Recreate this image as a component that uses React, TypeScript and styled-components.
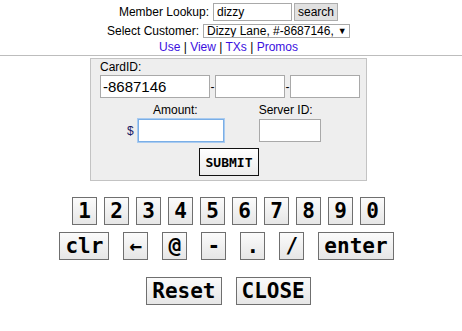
import React from "react";
import styled, { createGlobalStyle } from "styled-components";

const Global = createGlobalStyle`
  html, body { margin: 0; padding: 0; background: #fff; }
  body { font-family: "Liberation Sans", Arial, sans-serif; font-size: 12px; color: #000; }
`;

const Page = styled.div`
  display: flex;
  flex-direction: column;
  align-items: center;
`;

const Header = styled.div`
  display: flex;
  flex-direction: column;
  align-items: center;
  padding: 3px 5px 0 0;
  width: 100%;
  box-sizing: border-box;
`;

const Row = styled.div<{ $mt?: number }>`
  display: flex;
  align-items: center;
  justify-content: center;
  margin-top: ${(p) => p.$mt ?? 0}px;
`;

const Label = styled.span`
  font-size: 12px;
  line-height: 14px;
  color: #000;
  white-space: pre;
`;

const LookupInput = styled.input`
  box-sizing: border-box;
  width: 79px;
  height: 18px;
  margin: 0 0 0 4px;
  padding: 0 3px;
  border: 1px solid #a9a9a9;
  font-family: "Liberation Sans", Arial, sans-serif;
  font-size: 12px;
  background: #fff;
  outline: none;
`;

const SmallButton = styled.button`
  box-sizing: border-box;
  height: 18px;
  margin-left: 2px;
  padding: 0 3px;
  border: 1px solid #adadad;
  background: #e1e1e1;
  font-family: "Liberation Sans", Arial, sans-serif;
  font-size: 12px;
  line-height: 14px;
  color: #000;
`;

const Select = styled.div`
  box-sizing: border-box;
  width: 147px;
  height: 14px;
  margin-left: 4px;
  padding: 0 3px;
  border: 1px solid #a9a9a9;
  background: #fff;
  display: flex;
  align-items: center;
  justify-content: space-between;
  font-size: 12px;
  line-height: 12px;
  overflow: hidden;
  white-space: nowrap;
`;

const Arrow = styled.span`
  font-size: 9px;
  margin-left: 4px;
`;

const Links = styled.div`
  margin-top: 2px;
  font-size: 12px;
  line-height: 14px;
  color: #000;
  white-space: pre;
`;

const Link = styled.a`
  color: #3b0fe0;
  text-decoration: none;
`;

const Rule = styled.div`
  align-self: stretch;
  height: 0;
  margin-right: -5px;
  border-top: 1px solid #bdbdbd;
  margin-top: 1px;
`;

const Panel = styled.div`
  box-sizing: border-box;
  width: 277px;
  height: 123px;
  margin-top: 2px;
  border: 1px solid #c3c3c3;
  background: #eeeeee;
  padding: 1px 0 0 9px;
  display: flex;
  flex-direction: column;
`;

const CardRow = styled.div`
  display: flex;
  align-items: center;
  margin-top: 1px;
`;

const Field = styled.input<{ $w: number; $h?: number; $focus?: boolean }>`
  box-sizing: border-box;
  width: ${(p) => p.$w}px;
  height: ${(p) => p.$h ?? 23}px;
  margin: 0;
  padding: 0 2px;
  border: 1px solid ${(p) => (p.$focus ? "#7aaee6" : "#a9a9a9")};
  box-shadow: ${(p) => (p.$focus ? "0 0 0 1px #a9cbf0" : "none")};
  background: #fff;
  font-family: "Liberation Sans", Arial, sans-serif;
  font-size: 15px;
  color: #000;
  outline: none;
`;

const Dash = styled.span`
  width: 5px;
  text-align: center;
  font-size: 12px;
`;

const FieldsRow = styled.div`
  display: flex;
  margin-top: 5px;
`;

const Column = styled.div<{ $align: string; $ml: number }>`
  display: flex;
  flex-direction: column;
  align-items: ${(p) => p.$align};
  margin-left: ${(p) => p.$ml}px;
`;

const Dollar = styled.span`
  font-size: 12px;
  color: #1c1a66;
  margin-right: 4px;
`;

const InputLine = styled.div`
  display: flex;
  align-items: center;
  margin-top: 2px;
`;

const Submit = styled.button`
  box-sizing: border-box;
  align-self: flex-start;
  margin: 6px 0 0 99px;
  width: 60px;
  height: 28px;
  padding: 0;
  border: 1px solid #111;
  background: linear-gradient(#ffffff, #ececec);
  font-family: "DejaVu Sans Mono", "Liberation Mono", monospace;
  font-weight: bold;
  font-size: 13px;
  color: #000;
`;

const Keypad = styled.div`
  display: flex;
  flex-direction: column;
  align-items: center;
  margin: 16px 5px 0 0;
`;

const KeyRow = styled.div<{ $gap: number; $mt: number; $pr?: number }>`
  display: flex;
  gap: ${(p) => p.$gap}px;
  margin-top: ${(p) => p.$mt}px;
  padding-right: ${(p) => p.$pr ?? 0}px;
`;

const Key = styled.button`
  box-sizing: border-box;
  height: 28px;
  min-width: 25px;
  padding: 0 5px;
  border: 1px solid #6f6f6f;
  background: linear-gradient(#fbfbfb, #e6e6e6);
  font-family: "DejaVu Sans Mono", "Liberation Mono", monospace;
  font-weight: bold;
  font-size: 21px;
  line-height: 26px;
  color: #000;
`;

export default function App() {
  const digits = ["1", "2", "3", "4", "5", "6", "7", "8", "9", "0"];
  const ops = ["clr", "\u2190", "@", "-", ".", "/", "enter"];
  return (
    <Page>
      <Global />
      <Header>
        <Row>
          <Label>Member Lookup:</Label>
          <LookupInput defaultValue="dizzy" />
          <SmallButton>search</SmallButton>
        </Row>
        <Row $mt={3}>
          <Label>Select Customer:</Label>
          <Select>
            <span>Dizzy Lane, #-8687146,</span>
            <Arrow>▼</Arrow>
          </Select>
        </Row>
        <Links>
          <Link href="#">Use</Link> | <Link href="#">View</Link> | <Link href="#">TXs</Link> | <Link href="#">Promos</Link>
        </Links>
        <Rule />
        <Panel>
          <Label>CardID:</Label>
          <CardRow>
            <Field $w={110} defaultValue="-8687146" />
            <Dash>-</Dash>
            <Field $w={70} />
            <Dash>-</Dash>
            <Field $w={70} />
          </CardRow>
          <FieldsRow>
            <Column $align="center" $ml={27}>
              <Label>Amount:</Label>
              <InputLine>
                <Dollar>$</Dollar>
                <Field $w={86} $h={23} $focus />
              </InputLine>
            </Column>
            <Column $align="flex-start" $ml={35}>
              <Label>Server ID:</Label>
              <InputLine>
                <Field $w={62} $h={23} />
              </InputLine>
            </Column>
          </FieldsRow>
          <Submit>SUBMIT</Submit>
        </Panel>
      </Header>
      <Keypad>
        <KeyRow $gap={7} $mt={0}>
          {digits.map((d) => (
            <Key key={d}>{d}</Key>
          ))}
        </KeyRow>
        <KeyRow $gap={14} $mt={7} $pr={4}>
          {ops.map((d) => (
            <Key key={d}>{d}</Key>
          ))}
        </KeyRow>
        <KeyRow $gap={14} $mt={17}>
          <Key>Reset</Key>
          <Key>CLOSE</Key>
        </KeyRow>
      </Keypad>
    </Page>
  );
}
